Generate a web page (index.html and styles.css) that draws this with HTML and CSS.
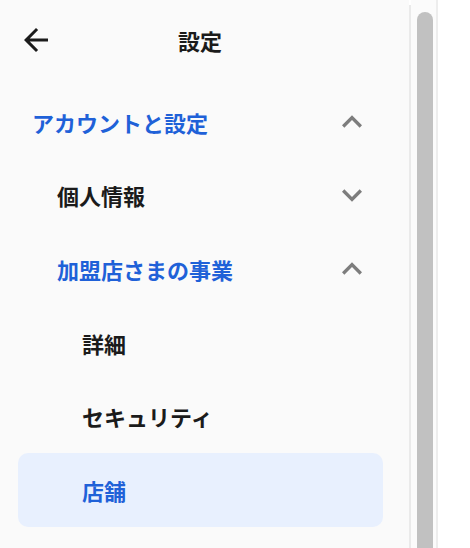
FILE: index.html
```
<!DOCTYPE html>
<html lang="ja">
<head>
<meta charset="utf-8">
<title>設定</title>
<link rel="stylesheet" href="styles.css">
</head>
<body>
<div class="page">
  <aside class="sidebar">
    <header class="header">
      <svg class="back" viewBox="0 0 24 24" aria-hidden="true"><path d="M20 11H7.83l5.59-5.59L12 4l-8 8 8 8 1.41-1.41L7.83 13H20v-2z"/></svg>
      <h1 class="title">設定</h1>
    </header>
    <nav class="nav">
      <div class="row lvl1 active-text">
        <span class="label">アカウントと設定</span>
        <svg class="chev" viewBox="0 0 24 24" aria-hidden="true"><path d="M12 8l-6 6 1.41 1.41L12 10.83l4.59 4.58L18 14z"/></svg>
      </div>
      <div class="row lvl2">
        <span class="label">個人情報</span>
        <svg class="chev" viewBox="0 0 24 24" aria-hidden="true"><path d="M16.59 8.59L12 13.17 7.41 8.59 6 10l6 6 6-6z"/></svg>
      </div>
      <div class="row lvl2 active-text">
        <span class="label">加盟店さまの事業</span>
        <svg class="chev" viewBox="0 0 24 24" aria-hidden="true"><path d="M12 8l-6 6 1.41 1.41L12 10.83l4.59 4.58L18 14z"/></svg>
      </div>
      <div class="row lvl3">
        <span class="label">詳細</span>
      </div>
      <div class="row lvl3">
        <span class="label">セキュリティ</span>
      </div>
      <div class="row lvl3 active-text selected">
        <span class="label">店舗</span>
      </div>
    </nav>
  </aside>
  <div class="rail"></div>
  <div class="track"><div class="thumb"></div></div>
  <div class="rail rail-right"></div>
  <div class="rest"></div>
</div>
</body>
</html>
```
FILE: styles.css
```
html, body {
  margin: 0;
  padding: 0;
  background: #ffffff;
}
body {
  font-family: "Noto Sans CJK JP", "Noto Sans", sans-serif;
  color: #1b1b1b;
}
.page {
  display: flex;
  height: 548px;
  overflow: hidden;
}
.sidebar {
  width: 409px;
  flex: none;
  background: #fafafa;
  box-sizing: border-box;
  padding: 0 26px 0 18px;
}
.header {
  display: flex;
  align-items: center;
  height: 80px;
}
.back {
  width: 36px;
  height: 36px;
  fill: #1b1b1b;
  flex: none;
}
.title {
  margin: 0 0 0 124px;
  font-size: 22px;
  line-height: 1;
  font-weight: 600;
  color: #1b1b1b;
}
.nav {
  margin-top: 5px;
  display: flex;
  flex-direction: column;
}
.row {
  height: 73.6px;
  display: flex;
  align-items: center;
  justify-content: space-between;
  padding-right: 11px;
  box-sizing: border-box;
  border-radius: 10px;
}
.label {
  font-size: 22px;
  line-height: 1;
  font-weight: 700;
}
.lvl1 { padding-left: 14px; }
.lvl2 { padding-left: 39px; }
.lvl3 { padding-left: 64px; }
.active-text .label { color: #1f61d8; }
.selected { background: #e8f0fe; }
.chev {
  width: 40px;
  height: 40px;
  fill: #7d7d7d;
  flex: none;
}
.rail {
  width: 2px;
  flex: none;
  margin-top: 5px;
  background: #eaeaea;
}
.rail-right {
  margin-top: 0;
  background: #ededed;
}
.track {
  width: 25px;
  flex: none;
  background: #fbfbfb;
  box-sizing: border-box;
  padding: 12px 3px 0 6px;
}
.thumb {
  width: 16px;
  height: 600px;
  background: #c1c1c1;
  border-radius: 8px;
}
.rest {
  flex: 1;
  background: #ffffff;
}
```
